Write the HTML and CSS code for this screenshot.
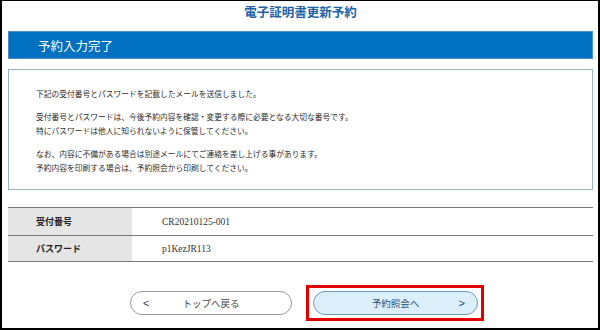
FILE: index.html
```html
<!DOCTYPE html>
<html lang="ja">
<head>
<meta charset="utf-8">
<title>電子証明書更新予約</title>
<link rel="stylesheet" href="styles.css">
</head>
<body>
<div class="frame">
  <h1 class="title">電子証明書更新予約</h1>
  <h2 class="bar">予約入力完了</h2>
  <div class="notice">
    <p>下記の受付番号とパスワードを記載したメールを送信しました。</p>
    <p>受付番号とパスワードは、今後予約内容を確認・変更する際に必要となる大切な番号です。<br>特にパスワードは他人に知られないように保管してください。</p>
    <p>なお、内容に不備がある場合は別途メールにてご連絡を差し上げる事があります。<br>予約内容を印刷する場合は、予約照会から印刷してください。</p>
  </div>
  <table class="info">
    <tr><th>受付番号</th><td>CR20210125-001</td></tr>
    <tr><th>パスワード</th><td>p1KezJR113</td></tr>
  </table>
  <div class="actions">
    <a class="btn btn-back"><span class="arrow">&lt;</span><span class="label">トップへ戻る</span></a>
    <span class="highlight">
      <a class="btn btn-next"><span class="label">予約照会へ</span><span class="arrow">&gt;</span></a>
    </span>
  </div>
</div>
</body>
</html>
```
FILE: styles.css
```css
html, body {
  margin: 0;
  padding: 0;
  background: #fff;
}
body {
  font-family: "Noto Sans CJK JP", "Noto Sans", sans-serif;
  color: #333;
}
.frame {
  width: 600px;
  height: 330px;
  box-sizing: border-box;
  border: 2px solid #000;
  border-top-width: 1px;
  padding: 0 5px 0 6px;
  overflow: hidden;
}
.title {
  margin: 0;
  height: 30px;
  line-height: 22px;
  text-align: center;
  font-size: 12.5px;
  font-weight: bold;
  color: #1d63a6;
}
.bar {
  margin: 0;
  height: 28px;
  line-height: 28px;
  background: #0070c0;
  color: #fff;
  font-size: 12.5px;
  font-weight: normal;
  padding-left: 29px;
  border: 1px solid #4a8fc8;
  box-sizing: border-box;
}
.notice {
  margin-top: 10px;
  border: 1px solid #95b4c8;
  height: 121px;
  box-sizing: border-box;
  padding: 17px 20px 0 27px;
  font-size: 7.75px;
  line-height: 14px;
  color: #2a2a2a;
}
.notice p {
  margin: 0 0 9px;
}
.info {
  margin-top: 17px;
  width: 100%;
  border-collapse: collapse;
  font-size: 9px;
}
.info th, .info td {
  border-top: 1px solid #7a7a7a;
  border-bottom: 1px solid #7a7a7a;
  text-align: left;
  padding: 0;
}
.info tr:first-child th, .info tr:first-child td { height: 27px; }
.info tr:last-child th, .info tr:last-child td { height: 25px; }
.info th {
  width: 96px;
  background: #e5e5e5;
  padding-left: 28px;
  font-weight: bold;
  color: #222;
}
.info td {
  padding-left: 30px;
  font-family: "Liberation Serif", serif;
  font-size: 9.5px;
  color: #333;
}
.actions {
  margin-top: 23px;
  display: flex;
  align-items: center;
  padding-left: 122px;
}
.btn {
  display: flex;
  align-items: center;
  height: 24px;
  box-sizing: border-box;
  border-radius: 12px;
  font-size: 9.5px;
  color: #444;
  position: relative;
  text-decoration: none;
}
.btn-back {
  width: 162px;
  border: 1px solid #9a9a9a;
  background: #fff;
}
.btn-back .arrow {
  position: absolute;
  left: 12px;
  font-size: 11px;
  font-family: "Liberation Sans", sans-serif;
}
.btn .label {
  flex: 1;
  text-align: center;
}
.highlight {
  margin-left: 14px;
  border: 3px solid #e00000;
  padding: 3px 3px 3px 4px;
  display: flex;
}
.btn-next {
  width: 165px;
  border: 1px solid #6b9bbb;
  background: #ddeefb;
  color: #1d4f7a;
}
.btn-next .arrow {
  position: absolute;
  right: 12px;
  font-size: 11px;
  font-family: "Liberation Sans", sans-serif;
  color: #1d4f7a;
}
```
